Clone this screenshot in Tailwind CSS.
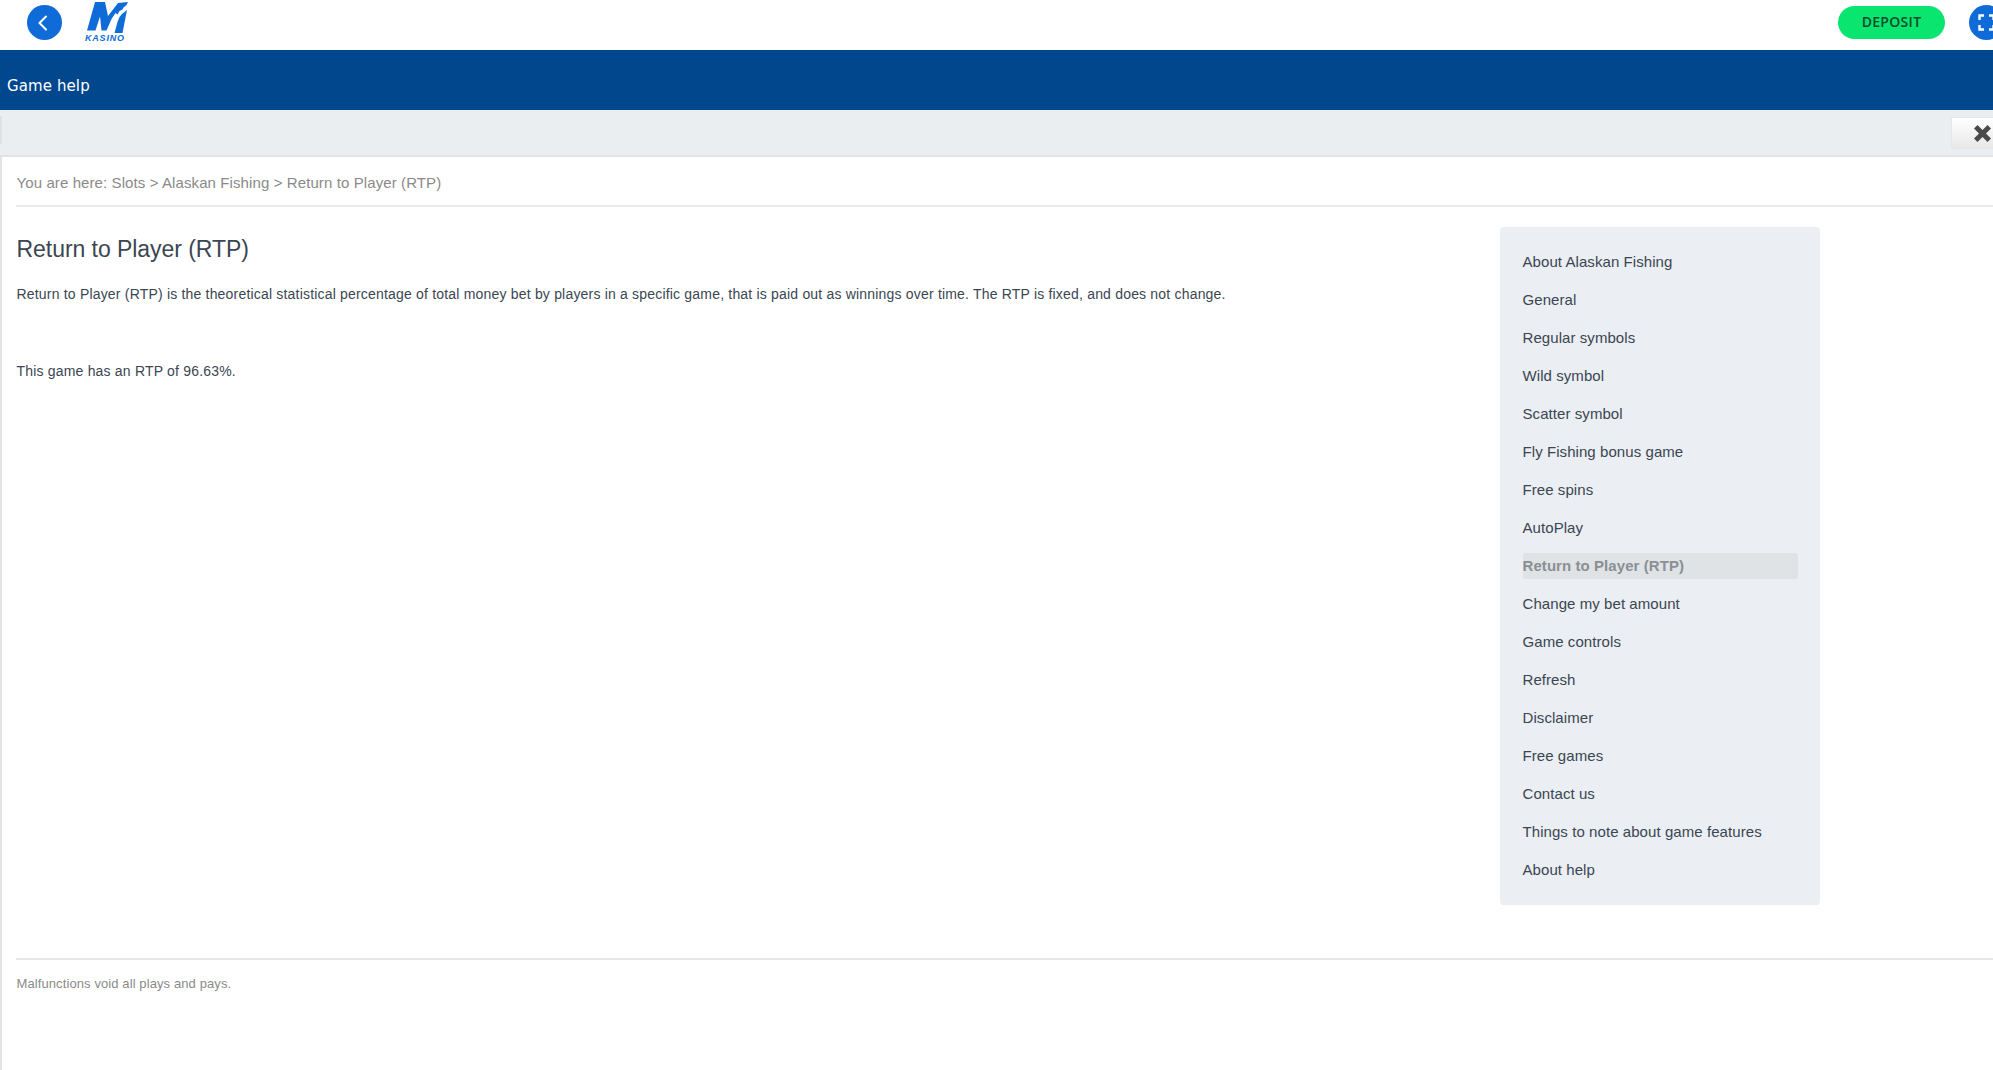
<!DOCTYPE html>
<html lang="en">
<head>
<meta charset="utf-8">
<title>Game help</title>
<script src="https://cdn.jsdelivr.net/npm/@tailwindcss/browser@4"></script>
</head>
<body class="bg-white overflow-hidden font-['Liberation_Sans',Arial,sans-serif]">
<div class="w-[1993px] h-[1070px] flex flex-col overflow-hidden">
  <header class="h-[50px] shrink-0 bg-white flex items-center relative">
    <button class="ml-[27px] w-[35px] h-[35px] rounded-full bg-[#0f6bd8] flex items-center justify-center -mt-[5px] pr-[3px]">
      <svg width="14" height="18" viewBox="0 0 14 18" fill="none" stroke="#fff" stroke-width="2" stroke-linecap="round" stroke-linejoin="round"><path d="M10 2.500 3.500 9l6.500 6.500"/></svg>
    </button>
    <div class="ml-[24px] relative w-[44px] h-[44px] -mt-[6px]">
      <svg class="absolute left-0 top-0" width="44" height="35" viewBox="0 0 44 35" fill="#0f6bd8">
        <path d="M9 2h10l3 14L32 3l10-1-1.500 3-3 2.500-1 2-3 1.500-2 3.500-2-1.500-4 6-5 11.500h-5l-1.500-14-4.500 14H1Z"/>
        <path d="M36 14 41 10 36.500 33h-8l3-11 2-5Z"/>
      </svg>
      <span class="absolute left-[-1px] top-[34px] text-[9px] leading-[9px] font-bold italic tracking-[0.8px] text-[#0f6bd8]">KASINO</span>
    </div>
    <button class="absolute left-[1838px] top-[6px] w-[107px] h-[33px] rounded-full bg-[#0ae56f] pb-[2px] text-[14px] tracking-[0.3px] font-['Open_Sans',sans-serif] font-semibold text-[#0b4a2c] flex items-center justify-center">DEPOSIT</button>
    <button class="absolute left-[1969px] top-[5px] w-[35px] h-[35px] rounded-full bg-[#0f6bd8] flex items-center justify-center">
      <svg width="17" height="17" viewBox="0 0 17 17" fill="none" stroke="#fff" stroke-width="2.400"><path d="M1.500 6V1.500H6M11 1.500h4.500V6M15.500 11v4.500H11M6 15.500H1.500V11"/></svg>
    </button>
  </header>

  <div class="h-[60px] shrink-0 bg-[#00478d] flex items-center pl-[7px] pt-[12px] text-white text-[15px] font-['DejaVu_Sans',sans-serif] tracking-[0.1px]">Game help</div>

  <div class="h-[47px] shrink-0 bg-[#ebeef1] border-b-2 border-[#e3e3e3] relative">
    <div class="absolute left-0 top-[6px] w-[2px] h-[28px] bg-[#dfe2e5]"></div>
    <button class="absolute left-[1951px] top-[7px] w-[44px] h-[32px] rounded-[2px] bg-gradient-to-b from-white to-[#e8e8e8] border border-[#e6e6e6] flex items-center pl-[22px]">
      <svg width="17" height="17" viewBox="0 0 17 17" fill="#4a4a4a"><path d="M3.500 0 8.500 5 13.500 0 17 3.500 12 8.500 17 13.500 13.500 17 8.500 12 3.500 17 0 13.500 5 8.500 0 3.500Z"/></svg>
    </button>
  </div>

  <main class="flex-1 border-l-2 border-[#e3e3e3] pl-[14px] flex flex-col">
    <div class="h-[50px] shrink-0 border-b-2 border-[#ebebeb] flex items-center pt-[4px] pl-[0.5px] text-[15px] tracking-[0.1px] text-[#8a8a8a]">You are here: Slots &gt; Alaskan Fishing &gt; Return to Player (RTP)</div>
    <div class="flex h-[751px] shrink-0">
      <article class="w-[1484px] shrink-0 text-[#3a4652]">
        <h1 class="mt-[26px] pl-[0.5px] text-[23px] leading-[32px] tracking-[-0.05px] font-normal">Return to Player (RTP)</h1>
        <p class="mt-[19px] pl-[0.5px] text-[14px] leading-[20px] tracking-[0.19px]">Return to Player (RTP) is the theoretical statistical percentage of total money bet by players in a specific game, that is paid out as winnings over time. The RTP is fixed, and does not change.</p>
        <p class="mt-[57px] pl-[0.5px] text-[14px] leading-[20px] tracking-[0.19px]">This game has an RTP of 96.63%.</p>
      </article>
      <nav class="mt-[20px] w-[320px] h-[678px] shrink-0 rounded-[4px] bg-[#ebeef2] pt-[16px] pl-[22.5px] pr-[22px] text-[15px] tracking-[0.07px] text-[#3a4652]">
        <ul class="flex flex-col">
          <li class="h-[38px] flex items-center">About Alaskan Fishing</li>
          <li class="h-[38px] flex items-center">General</li>
          <li class="h-[38px] flex items-center">Regular symbols</li>
          <li class="h-[38px] flex items-center">Wild symbol</li>
          <li class="h-[38px] flex items-center">Scatter symbol</li>
          <li class="h-[38px] flex items-center">Fly Fishing bonus game</li>
          <li class="h-[38px] flex items-center">Free spins</li>
          <li class="h-[38px] flex items-center">AutoPlay</li>
          <li class="h-[38px] flex items-center"><span class="w-full h-[26px] flex items-center rounded-[2px] bg-[#dfe3e6] font-bold text-[#8a8f94]">Return to Player (RTP)</span></li>
          <li class="h-[38px] flex items-center">Change my bet amount</li>
          <li class="h-[38px] flex items-center">Game controls</li>
          <li class="h-[38px] flex items-center">Refresh</li>
          <li class="h-[38px] flex items-center">Disclaimer</li>
          <li class="h-[38px] flex items-center">Free games</li>
          <li class="h-[38px] flex items-center">Contact us</li>
          <li class="h-[38px] flex items-center">Things to note about game features</li>
          <li class="h-[38px] flex items-center">About help</li>
        </ul>
      </nav>
    </div>
    <footer class="border-t-2 border-[#e6e6e6] pt-[16px] pl-[0.5px] text-[13px] leading-[16px] tracking-[0.1px] text-[#8a8a8a]">Malfunctions void all plays and pays.</footer>
  </main>
</div>
</body>
</html>
